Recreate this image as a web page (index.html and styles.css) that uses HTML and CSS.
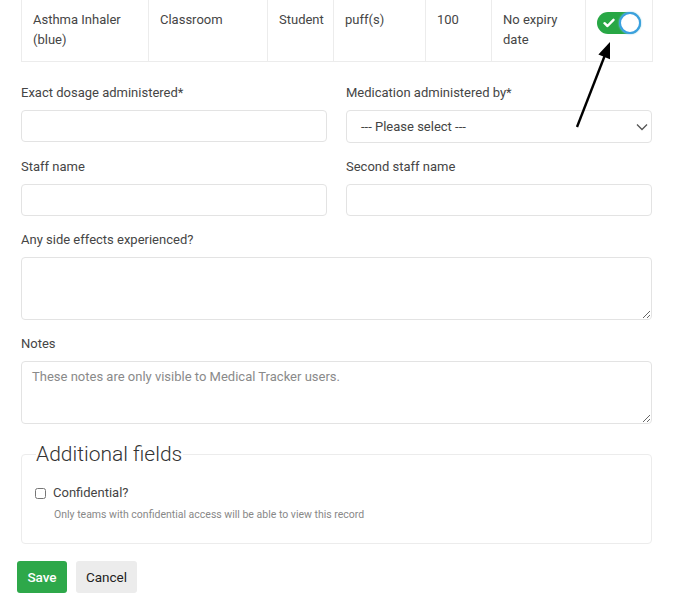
FILE: index.html
```html
<!DOCTYPE html>
<html lang="en">
<head>
  <meta charset="UTF-8">
  <title>Administer medication</title>
  <link rel="stylesheet" href="styles.css">
</head>
<body>
  <div class="page">
    <table class="meds">
      <colgroup>
        <col class="w-name"><col class="w-loc"><col class="w-who"><col class="w-unit"><col class="w-qty"><col class="w-exp"><col class="w-tog">
      </colgroup>
      <tr>
        <td>Asthma Inhaler (blue)</td>
        <td>Classroom</td>
        <td>Student</td>
        <td>puff(s)</td>
        <td>100</td>
        <td>No expiry date</td>
        <td class="c-tog">
          <span class="toggle">
            <svg class="tick" width="12" height="10" viewBox="0 0 12 10"><path d="M1.5 5.2 L4.5 8 L10.5 1.8" fill="none" stroke="#fff" stroke-width="2.4" stroke-linecap="round" stroke-linejoin="round"/></svg>
            <span class="knob"></span>
          </span>
        </td>
      </tr>
    </table>

    <div class="grid">
      <div class="field">
        <label>Exact dosage administered*</label>
        <input type="text">
      </div>
      <div class="field">
        <label>Medication administered by*</label>
        <div class="select">
          <span>--- Please select ---</span>
          <svg width="12" height="8" viewBox="0 0 12 8"><path d="M1 1.5 L6 6.5 L11 1.5" fill="none" stroke="#555" stroke-width="1.3"/></svg>
        </div>
      </div>
      <div class="field">
        <label>Staff name</label>
        <input type="text">
      </div>
      <div class="field">
        <label>Second staff name</label>
        <input type="text">
      </div>
    </div>

    <div class="field">
      <label>Any side effects experienced?</label>
      <textarea></textarea>
    </div>
    <div class="field">
      <label>Notes</label>
      <textarea placeholder="These notes are only visible to Medical Tracker users."></textarea>
    </div>

    <fieldset class="extra">
      <legend>Additional fields</legend>
      <label class="check"><input type="checkbox"> Confidential?</label>
      <p class="help">Only teams with confidential access will be able to view this record</p>
    </fieldset>

    <div class="buttons">
      <button class="btn save">Save</button>
      <button class="btn cancel">Cancel</button>
    </div>
  </div>

  <svg class="arrow" width="60" height="100" viewBox="0 0 60 100">
    <line x1="7" y1="91" x2="35" y2="19" stroke="#000" stroke-width="2.4"/>
    <polygon points="40,6 28.4,18.5 40,23.3" fill="#000"/>
  </svg>
</body>
</html>
```

FILE: styles.css
```css
body {
  margin: 0;
  font-family: Roboto, "Liberation Sans", sans-serif;
  font-size: 13px;
  color: #454545;
  background: #fff;
  position: relative;
}
.page {
  width: 631px;
  margin-left: 21px;
  padding-bottom: 14px;
}
.meds {
  width: 631px;
  border-collapse: collapse;
  table-layout: fixed;
  margin-top: -1px;
}
.w-name { width: 127px; }
.w-loc { width: 119px; }
.w-who { width: 66px; }
.w-unit { width: 92px; }
.w-qty { width: 66px; }
.w-exp { width: 94px; }
.w-tog { width: 67px; }
.meds td {
  border: 1px solid #ececec;
  padding: 10px 11px 11px;
  line-height: 20px;
  vertical-align: top;
}
.meds td.c-tog { padding-top: 12px; }
.toggle {
  display: block;
  position: relative;
  width: 44px;
  height: 22px;
  border-radius: 11px;
  background: #28a745;
}
.tick {
  position: absolute;
  left: 6px;
  top: 6px;
}
.knob {
  position: absolute;
  right: 0;
  top: 0;
  width: 18px;
  height: 18px;
  border-radius: 50%;
  background: #fff;
  border: 2px solid #3aa0e0;
  box-shadow: 0 0 2px #7cc2f0;
}
.grid {
  display: grid;
  grid-template-columns: 1fr 1fr;
  column-gap: 19px;
  margin-top: 21px;
}
.field {
  display: flex;
  flex-direction: column;
  margin-bottom: 14px;
}
.field label {
  line-height: 20px;
  margin-bottom: 7px;
}
input[type="text"], textarea, .select {
  box-sizing: border-box;
  height: 32px;
  border: 1px solid #e3e3e3;
  border-radius: 4px;
  font: inherit;
  margin: 0;
}
.select {
  height: 33px;
  display: flex;
  align-items: center;
  justify-content: space-between;
  padding: 0 3px 0 14px;
  color: #444;
}
textarea {
  height: 63px;
  resize: vertical;
  padding: 7px 10px;
  color: #444;
}
textarea::placeholder { color: #8a8a8a; }
.extra {
  border: 1px solid #ececec;
  border-radius: 4px;
  margin: 17px 0 0;
  padding: 16px 14px 22px;
}
.extra legend {
  font-size: 21px;
  font-weight: 300;
  padding: 0 1px 0 0;
  color: #333;
  line-height: 26px;
}
.check {
  display: flex;
  align-items: center;
  gap: 7px;
  line-height: 20px;
  color: #444;
}
.check input {
  margin: 0 0 0 -1px;
  width: 11px;
  height: 11px;
}
.help {
  margin: 5px 0 0 18px;
  font-size: 10.5px;
  color: #888;
}
.buttons {
  display: flex;
  gap: 9px;
  margin: 17px 0 0 -4px;
}
.btn {
  font: inherit;
  font-size: 13.5px;
  height: 32px;
  border: none;
  border-radius: 3px;
  padding: 0;
}
.save {
  background: #2ea84a;
  color: #fff;
  font-weight: 500;
  width: 50px;
}
.cancel {
  background: #ececec;
  color: #222;
  width: 61px;
}
.arrow {
  position: absolute;
  left: 570px;
  top: 36px;
}
```
